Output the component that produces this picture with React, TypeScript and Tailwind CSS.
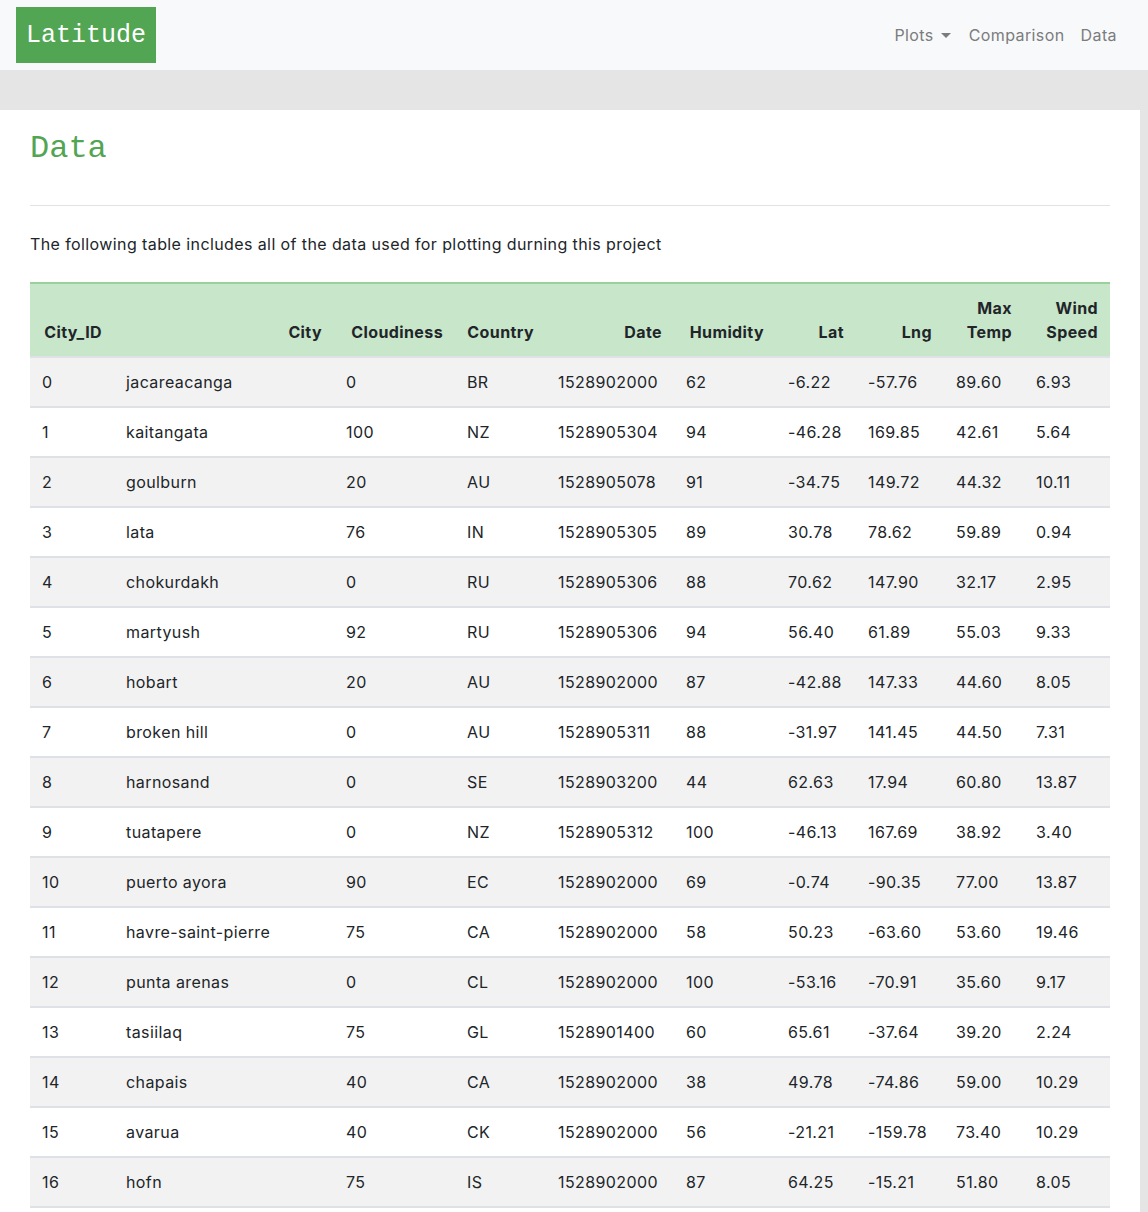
import React from "react";

const rows: (string | number)[][] = [
  [0, "jacareacanga", 0, "BR", 1528902000, 62, "-6.22", "-57.76", "89.60", "6.93"],
  [1, "kaitangata", 100, "NZ", 1528905304, 94, "-46.28", "169.85", "42.61", "5.64"],
  [2, "goulburn", 20, "AU", 1528905078, 91, "-34.75", "149.72", "44.32", "10.11"],
  [3, "lata", 76, "IN", 1528905305, 89, "30.78", "78.62", "59.89", "0.94"],
  [4, "chokurdakh", 0, "RU", 1528905306, 88, "70.62", "147.90", "32.17", "2.95"],
  [5, "martyush", 92, "RU", 1528905306, 94, "56.40", "61.89", "55.03", "9.33"],
  [6, "hobart", 20, "AU", 1528902000, 87, "-42.88", "147.33", "44.60", "8.05"],
  [7, "broken hill", 0, "AU", 1528905311, 88, "-31.97", "141.45", "44.50", "7.31"],
  [8, "harnosand", 0, "SE", 1528903200, 44, "62.63", "17.94", "60.80", "13.87"],
  [9, "tuatapere", 0, "NZ", 1528905312, 100, "-46.13", "167.69", "38.92", "3.40"],
  [10, "puerto ayora", 90, "EC", 1528902000, 69, "-0.74", "-90.35", "77.00", "13.87"],
  [11, "havre-saint-pierre", 75, "CA", 1528902000, 58, "50.23", "-63.60", "53.60", "19.46"],
  [12, "punta arenas", 0, "CL", 1528902000, 100, "-53.16", "-70.91", "35.60", "9.17"],
  [13, "tasiilaq", 75, "GL", 1528901400, 60, "65.61", "-37.64", "39.20", "2.24"],
  [14, "chapais", 40, "CA", 1528902000, 38, "49.78", "-74.86", "59.00", "10.29"],
  [15, "avarua", 40, "CK", 1528902000, 56, "-21.21", "-159.78", "73.40", "10.29"],
  [16, "hofn", 75, "IS", 1528902000, 87, "64.25", "-15.21", "51.80", "8.05"],
];

const headers: React.ReactNode[] = [
  "City_ID",
  "City",
  "Cloudiness",
  "Country",
  "Date",
  "Humidity",
  "Lat",
  "Lng",
  <>Max<br />Temp</>,
  <>Wind<br />Speed</>,
];

const widths = [84, 220, 121, 91, 128, 102, 80, 88, 80, 86];

export default function App() {
  return (
    <div
      className="min-h-screen bg-[#e5e5e5] text-[#212529] tracking-[0.4px]"
      style={{ fontFamily: "Inter, 'Noto Sans', sans-serif" }}
    >
      <nav className="h-[70px] bg-[#f8f9fa] flex items-center justify-between pl-4 pr-[23px]">
        <div className="h-[56px] w-[140px] bg-[#52a552] flex items-center justify-center">
          <span
            className="text-white text-[25px] leading-none tracking-normal"
            style={{ fontFamily: "'Liberation Mono', 'Courier New', monospace" }}
          >
            Latitude
          </span>
        </div>
        <div className="flex items-center text-[16px] text-[#7b7c7d] leading-6">
          <span className="px-2 flex items-center">
            Plots
            <span className="ml-[7px] inline-block w-0 h-0 border-l-[5px] border-r-[5px] border-t-[5px] border-l-transparent border-r-transparent border-t-[#7b7c7d]" />
          </span>
          <span className="px-2 ml-[2px]">Comparison</span>
          <span className="px-2">Data</span>
        </div>
      </nav>
      <div className="h-[40px]" />
      <div className="w-[1140px] bg-white pt-[20px] px-[30px] pb-[40px]">
        <h2
          className="text-[32px] leading-[38px] text-[#52a552] tracking-normal"
          style={{ fontFamily: "'Liberation Mono', 'Courier New', monospace" }}
        >
          Data
        </h2>
        <hr className="mt-[37px] border-0 border-t border-[#e2e2e2]" />
        <p className="mt-[26px] text-[16px] leading-6">
          The following table includes all of the data used for plotting durning this project
        </p>
        <table className="mt-[26px] w-[1080px] table-fixed border-collapse text-[16px] leading-6">
          <colgroup>
            {widths.map((w, i) => (
              <col key={i} style={{ width: w }} />
            ))}
          </colgroup>
          <thead>
            <tr className="bg-[#c8e6c9]">
              {headers.map((h, i) => (
                <th
                  key={i}
                  className="px-3 py-3 text-right align-bottom font-bold border-t-2 border-t-[#9bd09c] border-b-2 border-b-[#dee2e6]"
                >
                  {h}
                </th>
              ))}
            </tr>
          </thead>
          <tbody>
            {rows.map((r, ri) => (
              <tr key={ri} className={ri % 2 === 0 ? "bg-[#f2f2f2]" : "bg-white"}>
                {r.map((c, ci) => (
                  <td
                    key={ci}
                    className="px-3 py-3 text-left whitespace-nowrap border-b-2 border-b-[#dee2e6]"
                  >
                    {c}
                  </td>
                ))}
              </tr>
            ))}
          </tbody>
        </table>
      </div>
    </div>
  );
}
